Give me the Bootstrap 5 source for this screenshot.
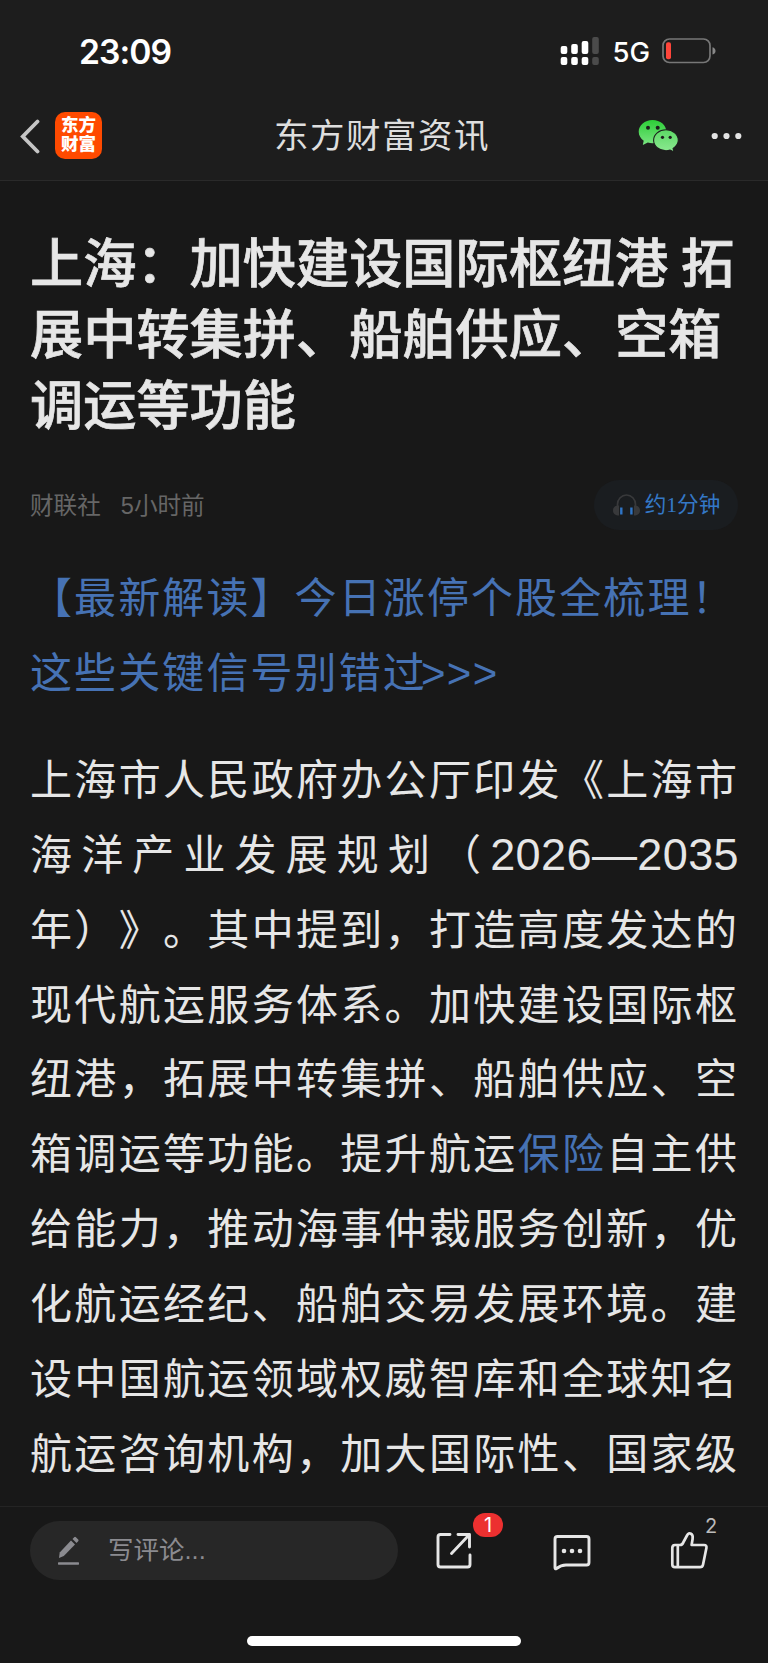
<!DOCTYPE html>
<html lang="zh-CN">
<head>
<meta charset="utf-8">
<meta name="viewport" content="width=device-width, initial-scale=1">
<title>东方财富资讯</title>
<link href="https://cdn.jsdelivr.net/npm/bootstrap@5.3.0/dist/css/bootstrap.min.css" rel="stylesheet">
<style>
body{background:#181818;color:#e6e6e6;font-family:"Liberation Sans","Noto Sans CJK SC",sans-serif;height:1663px;overflow:hidden;text-spacing-trim:space-all}
svg{display:block;flex:none}
.top-area{height:181px;background:#1d1d1d;border-bottom:1px solid #2a2a2a}
.status-row{height:92px;padding:10px 51px 0 79px;font-family:Inter,sans-serif;color:#fff}
.clock{font-size:33.7px;font-weight:600;line-height:1;letter-spacing:-1px;padding-top:2px}
.net-label{font-size:27.5px;font-weight:500;line-height:1;margin:3px 12px 0 12px}
.title-row{height:88px;padding:0 26px 0 20px}
.app-logo{width:47px;height:47px;border-radius:10px;background:#ff4a00;color:#fff;font-size:17.5px;font-weight:900;line-height:19px;margin:-2px 0 0 15px}
.page-title{font-size:34.5px;letter-spacing:1.5px;line-height:1;color:#dedede;padding-left:2px}
.side{width:180px}
.article{height:1325px;padding:48px 30px 0 30px}
.headline{font-size:53.2px;line-height:71px;font-weight:500;margin:0;color:#e6e6e6;white-space:nowrap;-webkit-text-stroke:.7px #e6e6e6;word-spacing:-2px}
.meta-row{height:50px;margin-top:38px;font-size:23.6px;color:#666}
.meta-row>span{padding-top:3px}
.listen{width:144px;height:50px;background:#1a1d20;color:#3478c6;font-size:21.6px;font-family:"Liberation Serif","Noto Sans CJK SC",serif}
.copy{font-size:42px;letter-spacing:2.1px;line-height:74.83px;white-space:nowrap;width:709px}
.copy.body-copy>div{text-align:justify;text-align-last:justify}
.years{font-size:45px;letter-spacing:.4px;line-height:1}
.arrows{letter-spacing:1.4px;margin-left:-6px}
.blue{color:#4672b4}
.bottom-bar{height:157px;border-top:1px solid #242424;padding:14px 0 0 30px}
.comment-box{width:368px;height:59px;background:#272727;color:#8b8b90;font-size:25.5px;padding-left:27px}
.tool{width:118px;height:59px}
.count-badge{position:absolute;left:75px;top:-8px;width:30px;height:24px;border-radius:12px;background:#ec3030;color:#fff;font:20px/24px Inter,sans-serif}
.like-count{position:absolute;left:71px;top:-7px;font:20px/24px Inter,sans-serif;color:#bbb}
.home-line{width:274px;height:10px;border-radius:5px;background:#fff}
</style>
</head>
<body class="d-flex flex-column">
<header class="top-area flex-shrink-0">
  <div class="status-row d-flex align-items-center">
    <span class="clock me-auto">23:09</span>
    <svg width="40" height="28" viewBox="0 0 40 28"><g fill="#fff"><rect x=".7" y="9" width="6.6" height="8" rx="2"/><rect x="11.2" y="7" width="6.6" height="10" rx="2"/><rect x="21.7" y="4" width="6.6" height="13" rx="2"/><rect x=".7" y="20" width="6.6" height="8" rx="2"/><rect x="11.2" y="20" width="6.6" height="8" rx="2"/><rect x="21.7" y="20" width="6.6" height="8" rx="2"/></g><g fill="#4b4b4b"><rect x="32.2" y="0" width="6.6" height="17" rx="2"/><rect x="32.2" y="20" width="6.6" height="8" rx="2"/></g></svg>
    <span class="net-label">5G</span>
    <svg width="55" height="26" viewBox="0 0 55 26"><rect x="1" y="1" width="47" height="23.5" rx="6.5" fill="none" stroke="#777" stroke-width="1.7"/><rect x="4" y="4.2" width="5" height="17" rx="2" fill="#ff453a"/><path d="M50.5 9.2q3 1 3 3.7t-3 3.7z" fill="#888"/></svg>
  </div>
  <div class="title-row d-flex align-items-center justify-content-between">
    <div class="side d-flex align-items-center">
      <svg width="20" height="35" viewBox="0 0 20 35"><path d="M17.5 2.5 2.8 17.5l14.700 15" fill="none" stroke="#c5c5c5" stroke-width="3.8" stroke-linecap="round" stroke-linejoin="miter"/></svg>
      <div class="app-logo d-flex flex-column align-items-center justify-content-center"><span>东方</span><span>财富</span></div>
    </div>
    <div class="page-title">东方财富资讯</div>
    <div class="side d-flex align-items-center justify-content-end">
      <svg width="41" height="34" viewBox="0 0 41 34"><defs><linearGradient id="g1" x2="0" y2="1"><stop stop-color="#2dce38"/><stop offset="1" stop-color="#7ae481"/></linearGradient><linearGradient id="g2" x2="0" y2="1"><stop stop-color="#5cd965"/><stop offset="1" stop-color="#8de992"/></linearGradient></defs><path d="M14.5 1C6.800 1 .7 6.200 .7 12.700c0 3.700 2 6.800 5 9L4.800 26l5-2.500c1.500.5 3.100.7 4.700.7 7.700 0 13.800-5.200 13.800-11.700S22.200 1 14.500 1z" fill="url(#g1)"/><path d="M28 10.800c-6.900 0-12.400 4.600-12.400 10.500S21.100 31.700 28 31.700c1.400 0 2.800-.2 4.100-.6l4 2-1-3.700c3.200-2 5.200-4.900 5.200-8.100 0-5.900-5.400-10.500-12.300-10.500z" fill="url(#g2)" stroke="#1d1d1d" stroke-width="1.100"/><g fill="#1d1d1d"><circle cx="10" cy="8.800" r="2"/><circle cx="19.700" cy="8.800" r="2"/><circle cx="24.500" cy="18.300" r="1.600"/><circle cx="32.200" cy="18.300" r="1.600"/></g></svg>
      <svg style="margin-left:32px" width="31" height="8" viewBox="0 0 31 8"><g fill="#e4e4e4"><circle cx="3.700" cy="4" r="3.100"/><circle cx="15.500" cy="4" r="3.100"/><circle cx="27.300" cy="4" r="3.100"/></g></svg>
    </div>
  </div>
</header>

<main class="article flex-shrink-0 overflow-hidden">
  <h1 class="headline">上海：加快建设国际枢纽港 拓<br>展中转集拼、船舶供应、空箱<br>调运等功能</h1>
  <div class="meta-row d-flex align-items-center">
    <span>财联社</span><span class="me-auto" style="margin-left:20px">5小时前</span>
    <div class="listen rounded-pill d-flex align-items-center justify-content-center flex-shrink-0">
      <svg class="me-1" width="29" height="24" viewBox="0 0 29 24"><path d="M5.500 14V11.500a9 9.500 0 0 1 18 0V14" fill="none" stroke="#38393b" stroke-width="1.700"/><path d="M7 12.500v10C3.500 22.500 1 21 1 17.500s2.500-5 6-5zM22 12.500v10c3.500 0 6-1.500 6-5s-2.500-5-6-5z" fill="#38393b"/><path d="M9.300 14.500v7M19.400 14.500v7" stroke="#2f75c6" stroke-width="2.400"/></svg>
      <span>约1分钟</span>
    </div>
  </div>
  <div class="copy blue" style="margin-top:32px">【最新解读】今日涨停个股全梳理！<br>这些关键信号别错过<span class="arrows">&gt;&gt;&gt;</span></div>
  <div class="copy body-copy" style="margin-top:32.500px">
    <div>上海市人民政府办公厅印发《上海市</div>
    <div>海洋产业发展规划（<span class="years">2026—2035</span></div>
    <div>年）》。其中提到，打造高度发达的</div>
    <div>现代航运服务体系。加快建设国际枢</div>
    <div>纽港，拓展中转集拼、船舶供应、空</div>
    <div>箱调运等功能。提升航运<span class="blue">保险</span>自主供</div>
    <div>给能力，推动海事仲裁服务创新，优</div>
    <div>化航运经纪、船舶交易发展环境。建</div>
    <div>设中国航运领域权威智库和全球知名</div>
    <div>航运咨询机构，加大国际性、国家级</div>
  </div>
</main>

<footer class="bottom-bar flex-shrink-0 d-flex flex-column">
  <div class="d-flex">
    <div class="comment-box rounded-pill d-flex align-items-center">
      <svg width="24" height="30" viewBox="0 0 24 30"><g fill="#8b8b90"><path d="M2 22 2.700 16.500 14 4.500l4 4L6.800 20z"/><path d="m15.500 3 1.700-1.800q.8-.8 1.700 0l2.300 2.400q.8.800 0 1.600l-1.700 1.800z"/><rect x="1" y="26.300" width="21" height="2.400" rx=".6"/></g></svg>
      <span style="margin-left:27px">写评论...</span>
    </div>
    <div class="tool position-relative text-center">
      <svg width="118" height="59" viewBox="0 1 118 59" fill="none" stroke="#e6e6e6" stroke-width="2.900" stroke-linecap="round" stroke-linejoin="round"><path d="M52 14.500H42.500q-2.500 0-2.500 2.500V44.500q0 2.500 2.500 2.500H69.500q2.500 0 2.500-2.500V35M60 14.500H71.500V27M71 15 53.500 33.500"/></svg>
      <span class="count-badge">1</span>
    </div>
    <div class="tool">
      <svg width="118" height="59" viewBox="0 1 118 59"><path d="M41.500 16.500H70.500q2.500 0 2.500 2.500V42.500q0 2.500-2.500 2.500H50q-5 0-9.500 3.500-1.500 1-1.500-1V19Q39 16.500 41.500 16.500z" fill="none" stroke="#e6e6e6" stroke-width="2.900" stroke-linejoin="round"/><g fill="#e6e6e6"><circle cx="48" cy="31" r="2.300"/><circle cx="56" cy="31" r="2.300"/><circle cx="64" cy="31" r="2.300"/></g></svg>
    </div>
    <div class="tool position-relative">
      <svg width="118" height="59" viewBox="0 0 118 59" fill="none" stroke="#e6e6e6" stroke-width="2.700" stroke-linejoin="round"><path d="M46 24q2.500 0 3.500-3l3.500-6.500q1.600-3 4-1.700 2.200 1.200 1.600 5.200L57.600 24H70q3 0 2.400 3L69 43.700q-.5 2.500-3 2.500H41q-2.700 0-2.700-2.700V27q0-3 2.700-3zM43.800 24V46"/></svg>
      <span class="like-count">2</span>
    </div>
  </div>
  <div class="home-line" style="margin:56px 0 0 217px"></div>
</footer>
<script src="https://cdn.jsdelivr.net/npm/bootstrap@5.3.0/dist/js/bootstrap.bundle.min.js"></script>
</body>
</html>
